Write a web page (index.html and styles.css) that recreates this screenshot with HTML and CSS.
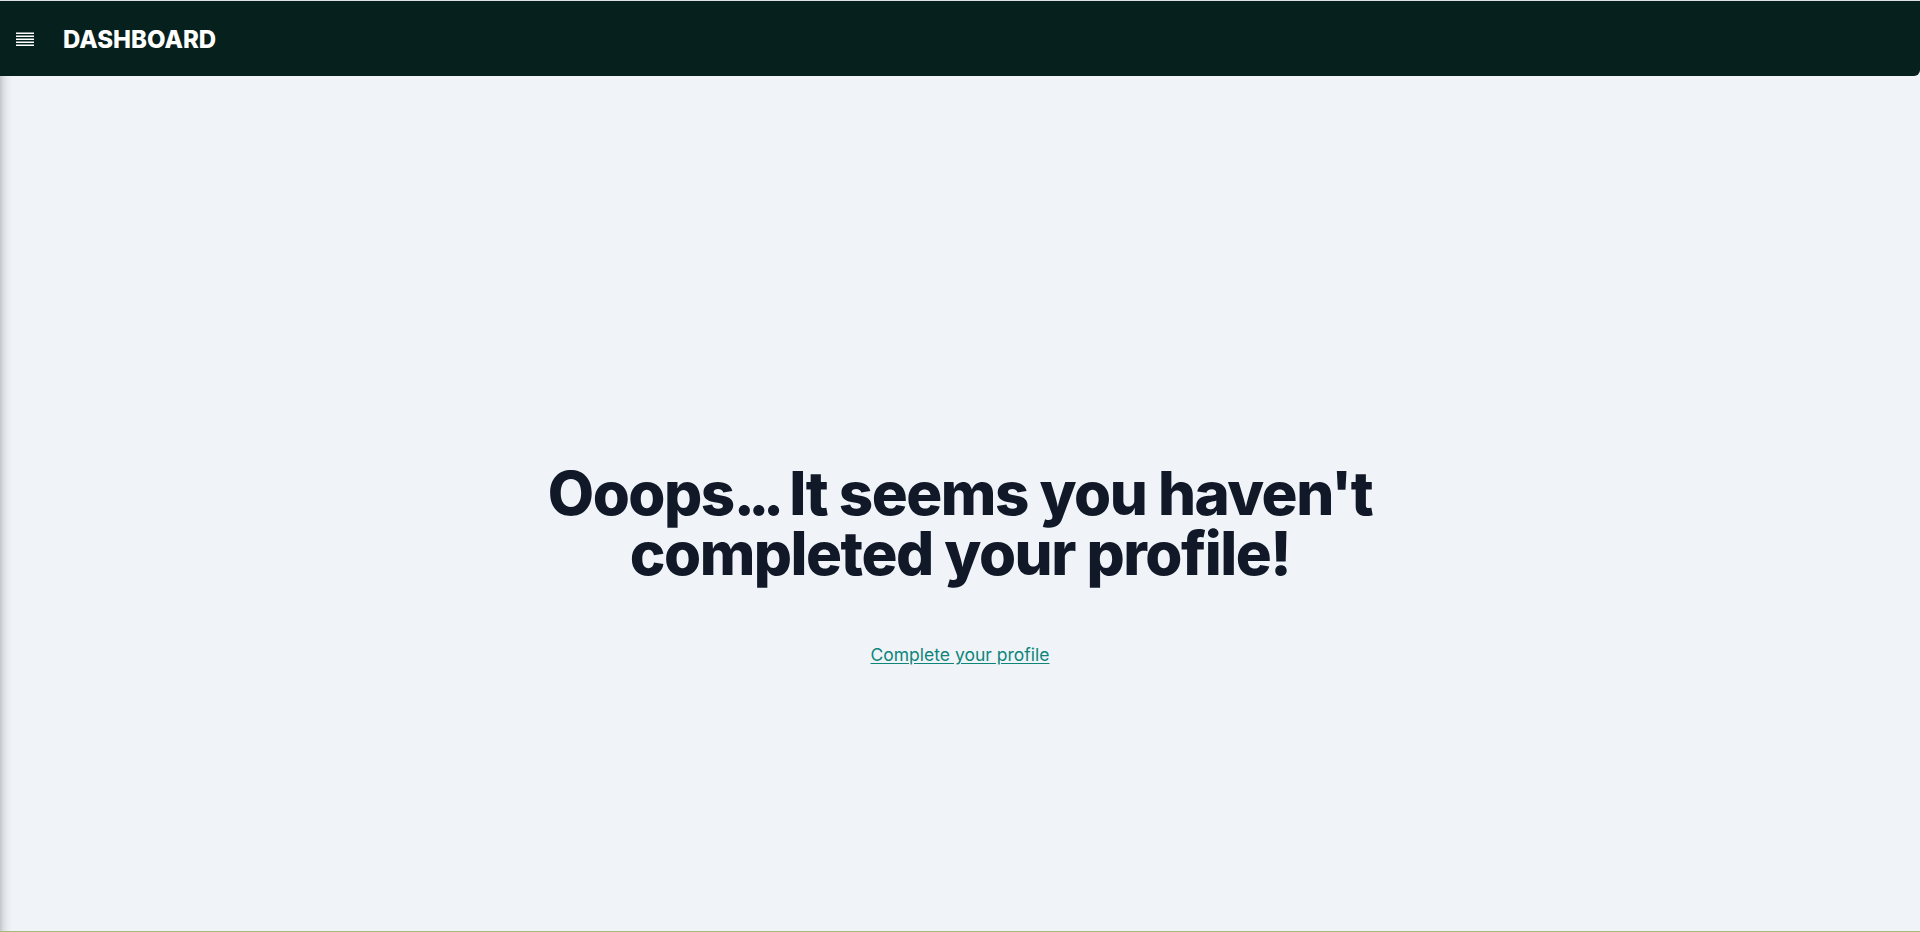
FILE: index.html
```html
<!DOCTYPE html>
<html lang="en">
<head>
<meta charset="utf-8">
<title>Dashboard</title>
<link rel="stylesheet" href="styles.css">
</head>
<body>
<div class="page">
  <div class="topline"></div>
  <header class="header">
    <button class="menu-btn" aria-label="Menu">
      <svg width="18" height="14" viewBox="0 0 18 14" fill="#ffffff">
        <rect x="0" y="0.5" width="18" height="1.5"/>
        <rect x="0" y="3.5" width="18" height="1.5"/>
        <rect x="0" y="6.5" width="18" height="1.5"/>
        <rect x="0" y="9.5" width="18" height="1.5"/>
        <rect x="0" y="12.5" width="18" height="1.5"/>
      </svg>
    </button>
    <h1 class="brand">DASHBOARD</h1>
  </header>
  <main class="main">
    <div class="empty">
      <h2 class="empty-title">Ooops<span class="dots">...</span> It seems you haven't<br>completed your profile!</h2>
      <a class="empty-link" href="#">Complete your profile</a>
    </div>
  </main>
  <div class="bottomline"></div>
</div>
</body>
</html>
```
FILE: styles.css
```css
html, body {
  margin: 0;
  padding: 0;
  height: 100%;
}
body {
  font-family: Inter, "Noto Sans", "Liberation Sans", sans-serif;
  background: #f0f4f9;
  overflow: hidden;
}
.page {
  display: flex;
  flex-direction: column;
  height: 932px;
}
.topline {
  height: 1px;
  background: #dde1e2;
  flex: none;
}
.header {
  flex: none;
  height: 75px;
  background: #06201d;
  border-bottom-right-radius: 6px;
  display: flex;
  align-items: center;
  padding-left: 16px;
  gap: 29px;
}
.menu-btn {
  background: none;
  border: 0;
  padding: 0;
  width: 18px;
  height: 14px;
  display: flex;
  cursor: pointer;
  margin-top: 1px;
}
.brand {
  margin: 0;
  color: #ffffff;
  font-size: 24px;
  font-weight: 800;
  letter-spacing: 0;
  line-height: 1;
  margin-top: 2px;
}
.main {
  flex: 1;
  background: linear-gradient(to right, #c3c7cc 0px, #dde1e6 4px, #eaeef3 8px, #f0f4f9 13px);
  display: flex;
  justify-content: center;
  align-items: flex-start;
  padding-top: 387px;
  box-sizing: border-box;
}
.empty {
  display: flex;
  flex-direction: column;
  align-items: center;
  text-align: center;
}
.empty-title {
  margin: 0;
  font-size: 60px;
  line-height: 60px;
  font-weight: 800;
  letter-spacing: -1.5px;
  color: #111827;
}
.dots {
  font-feature-settings: "calt" 0;
  letter-spacing: -6.5px;
}
.empty-link {
  margin-top: 60px;
  font-size: 17.5px;
  line-height: 24px;
  color: #0d8579;
  text-decoration: underline;
  text-underline-offset: 2px;
}
.bottomline {
  flex: none;
  height: 1px;
  background: #a9b879;
}
```
